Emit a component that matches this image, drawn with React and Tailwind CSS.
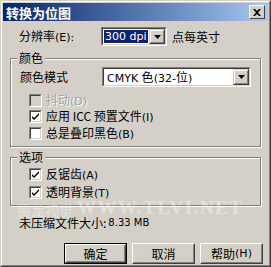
import React from "react";

const cjk = { fontFamily: '"Noto Sans CJK SC", "Liberation Sans", sans-serif' };

function Sunken({ className = "", children }) {
  return (
    <div className={"border border-t-[#808080] border-l-[#808080] border-r-white border-b-white " + className}>
      <div className="h-full w-full border border-t-[#404040] border-l-[#404040] border-r-[#d4d0c8] border-b-[#d4d0c8] bg-white flex items-center">
        {children}
      </div>
    </div>
  );
}

function DropBtn() {
  return (
    <div className="h-full w-[16px] border border-t-[#d4d0c8] border-l-[#d4d0c8] border-r-[#404040] border-b-[#404040]">
      <div className="h-full w-full border border-t-white border-l-white border-r-[#808080] border-b-[#808080] bg-[#d4d0c8] flex items-center justify-center">
        <svg width="7" height="4" viewBox="0 0 7 4"><path d="M0 0h7L3.5 4z" fill="#000" /></svg>
      </div>
    </div>
  );
}

function Check({ checked, disabled, label, suffix }) {
  return (
    <div className="flex items-center h-full">
      <div className={"w-[13px] h-[13px] border border-t-[#808080] border-l-[#808080] border-r-white border-b-white"}>
        <div className={"w-full h-full border border-t-[#404040] border-l-[#404040] border-r-[#d4d0c8] border-b-[#d4d0c8] flex items-center justify-center " + (disabled ? "bg-[#d4d0c8]" : "bg-white")}>
          {checked && (
            <svg width="7" height="7" viewBox="0 0 7 7"><path d="M0 2l2 2 5-5v2L2 6 0 4z" fill="#000" transform="translate(0 1)" /></svg>
          )}
        </div>
      </div>
      <span className={"ml-[4px] text-[12px] leading-none " + (disabled ? "text-[#a0a0a0] [text-shadow:1px_1px_0_#fff]" : "text-black")} style={cjk}>
        {label}
        <span className="text-[11px]" style={{ fontFamily: '"DejaVu Sans", sans-serif' }}>{suffix}</span>
      </span>
    </div>
  );
}

function Group({ title, className = "", children }) {
  return (
    <div className={"relative mx-[8px] border border-t-[#808080] border-l-[#808080] border-r-[#808080] border-b-[#808080] shadow-[inset_1px_1px_0_#fff,1px_1px_0_#fff] " + className}>
      <span className="absolute -top-[9px] left-[6px] bg-[#d4d0c8] px-[2px] text-[12px] leading-[16px] text-black" style={cjk}>{title}</span>
      {children}
    </div>
  );
}

function Btn({ label, suffix, def }) {
  return (
    <div className={"w-[63px] h-[21px] " + (def ? "border border-black" : "")}>
      <div className="w-full h-full border border-t-white border-l-white border-r-[#404040] border-b-[#404040]">
        <div className="w-full h-full border border-t-[#d4d0c8] border-l-[#d4d0c8] border-r-[#808080] border-b-[#808080] bg-[#d4d0c8] flex items-center justify-center text-[12px] text-black leading-none" style={cjk}>
          {label}
          {suffix && <span className="text-[11px]" style={{ fontFamily: '"DejaVu Sans", sans-serif' }}>{suffix}</span>}
        </div>
      </div>
    </div>
  );
}

export default function App() {
  return (
    <div className="w-[271px] h-[267px] bg-[#d4d0c8] border border-t-[#d4d0c8] border-l-[#d4d0c8] border-r-[#404040] border-b-[#404040] overflow-hidden relative">
      <div className="w-full h-full border border-t-white border-l-white border-r-[#808080] border-b-[#808080] flex flex-col">
        <div className="mx-[1px] mt-[1px] h-[18px] bg-gradient-to-r from-[#0a246a] to-[#a6caf0] flex items-center pl-[3px] pr-[3px]">
          <span className="text-white font-bold text-[13px] leading-none" style={cjk}>转换为位图</span>
          <div className="ml-auto w-[16px] h-[14px] border border-t-white border-l-white border-r-[#404040] border-b-[#404040] bg-[#d4d0c8] flex items-center justify-center">
            <svg width="8" height="7" viewBox="0 0 8 7"><path d="M0 0h2l2 2 2-2h2L5 3.5 8 7H6L4 5 2 7H0l3-3.5z" fill="#000" /></svg>
          </div>
        </div>

        <div className="flex items-center mt-[6px] h-[19px]">
          <span className="w-[99px] pl-[17px] text-[12px] leading-none text-black" style={cjk}>
            分辨率<span className="text-[11px]" style={{ fontFamily: '"DejaVu Sans", sans-serif' }}>(E):</span>
          </span>
          <Sunken className="w-[66px] h-[19px]">
            <span className="ml-[1px] bg-[#0a246a] text-white text-[11px] leading-[13px] px-[1px]" style={{ fontFamily: '"DejaVu Sans", sans-serif' }}>300 dpi</span>
            <div className="ml-auto h-full"><DropBtn /></div>
          </Sunken>
          <span className="ml-[5px] text-[12px] leading-none text-black" style={cjk}>点每英寸</span>
        </div>

        <Group title="颜色" className="mt-[12px] h-[89px]">
          <div className="flex items-center mt-[8px] pl-[9px] pr-[9px] h-[20px]">
            <span className="w-[82px] text-[12px] leading-none text-black" style={cjk}>颜色模式</span>
            <Sunken className="flex-1 h-[20px]">
              <span className="ml-[3px] text-[11px] text-black leading-none" style={{ fontFamily: '"DejaVu Sans", sans-serif' }}>
                CMYK <span className="text-[12px]" style={cjk}>色</span>(32-<span className="text-[12px]" style={cjk}>位</span>)
              </span>
              <div className="ml-auto h-full"><DropBtn /></div>
            </Sunken>
          </div>
          <div className="pl-[18px] mt-[5px] flex flex-col">
            <div className="h-[16px]"><Check disabled label="抖动" suffix="(D)" /></div>
            <div className="h-[17px]"><Check checked label="应用 ICC 预置文件" suffix="(I)" /></div>
            <div className="h-[16px]"><Check label="总是叠印黑色" suffix="(B)" /></div>
          </div>
        </Group>

        <Group title="选项" className="mt-[10px] h-[49px]">
          <div className="pl-[18px] mt-[7px] flex flex-col">
            <div className="h-[18px]"><Check checked label="反锯齿" suffix="(A)" /></div>
            <div className="h-[19px]"><Check checked label="透明背景" suffix="(T)" /></div>
          </div>
        </Group>

        <div className="pl-[17px] mt-[9px] h-[16px] flex items-center text-[12px] leading-none text-black" style={cjk}>
          未压缩文件大小:<span className="ml-[2px] text-[10px]" style={{ fontFamily: '"DejaVu Sans", sans-serif' }}>8.33 MB</span>
        </div>

        <div className="mt-[12px] flex justify-end gap-[5px] pr-[6px]">
          <Btn label="确定" def />
          <Btn label="取消" />
          <Btn label="帮助" suffix="(H)" />
        </div>
      </div>
      <div className="absolute left-[16px] top-[197px] flex items-end text-white/40 leading-none whitespace-nowrap pointer-events-none">
        <span className="text-[14px] tracking-[0px]" style={cjk}>腾龙视觉</span>
        <span className="ml-[4px] text-[19px] font-bold tracking-[1.5px]" style={{ fontFamily: '"Liberation Serif", serif' }}>WWW.TLVI.NET</span>
      </div>
    </div>
  );
}
